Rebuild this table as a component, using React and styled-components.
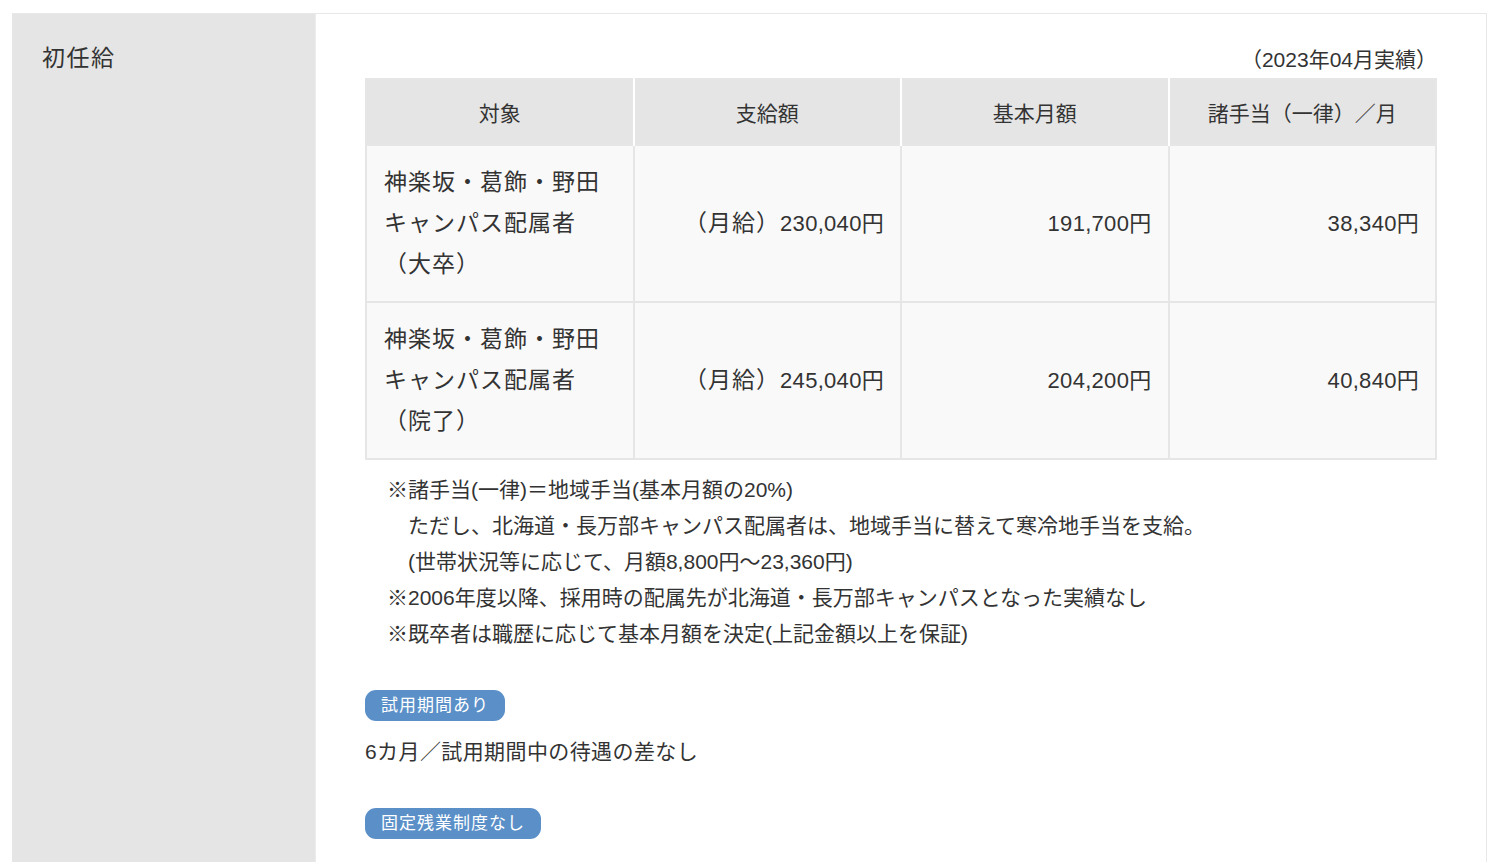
import React from 'react'
import styled, { createGlobalStyle } from 'styled-components'

const GlobalStyle = createGlobalStyle`
  html, body {
    margin: 0;
    padding: 0;
    background: #fff;
  }
  body {
    font-family: "Liberation Sans", "Noto Sans CJK JP", sans-serif;
    color: #333;
  }
`

//page wrapper
const Page = styled.div`
  padding: 13px 13px 0 12px;
  height: 862px;
  box-sizing: border-box;
  overflow: hidden;
`

//one definition row : label column + content
const Row = styled.section`
  display: grid;
  grid-template-columns: 304px 1fr;
  border-top: 1px solid #e8e8e8;
  border-right: 1px solid #e8e8e8;
  min-height: 849px;
`

const Label = styled.h2`
  margin: 0;
  background: #e5e5e5;
  padding: 26px 30px;
  font-size: 23px;
  font-weight: 400;
  line-height: 36px;
  letter-spacing: 1.5px;
  border-right: 1px solid #ececec;
`

const Content = styled.div`
  padding: 0 49px 0 49px;
`

const Caption = styled.p`
  margin: 0;
  padding: 28px 0 0 0;
  text-align: right;
  font-size: 21px;
  line-height: 36px;
`

const Table = styled.table`
  width: 100%;
  border-collapse: collapse;
  table-layout: fixed;
  border: 2px solid #e6e6e6;
`

const Th = styled.th`
  background: #e5e5e5;
  height: 66px;
  box-sizing: border-box;
  padding: 0 10px;
  font-size: 21px;
  font-weight: 400;
  text-align: center;
  border-left: 2px solid #fff;
  &:first-child {
    border-left: none;
  }
`

const Td = styled.td`
  background: #f9f9f9;
  height: 157px;
  box-sizing: border-box;
  padding: 0 16px 0 17px;
  font-size: 23px;
  line-height: 41px;
  letter-spacing: 1px;
  vertical-align: middle;
  text-align: ${p => (p.$right ? 'right' : 'left')};
  border: 2px solid #e6e6e6;
`

const Num = styled.span`
  font-size: 22px;
  letter-spacing: 0.3px;
`

const Notes = styled.div`
  margin: 12px 0 0;
  padding-left: 22px;
  font-size: 21px;
  line-height: 36px;
`

const NoteLine = styled.p`
  margin: 0;
  padding-left: ${p => (p.$indent ? '21px' : '0')};
`

const Badge = styled.span`
  display: inline-block;
  margin-top: ${p => p.$top}px;
  background: #5a8fc8;
  color: #fff;
  font-size: 17px;
  line-height: 31px;
  height: 31px;
  padding: 0 16px;
  border-radius: 11px;
  letter-spacing: 1px;
`

const Text = styled.p`
  margin: 13px 0 0;
  font-size: 21px;
  line-height: 36px;
  letter-spacing: 0.4px;
`

const rows = [
  { target: ['神楽坂・葛飾・野田', 'キャンパス配属者', '（大卒）'], pay: '230,040円', base: '191,700円', extra: '38,340円' },
  { target: ['神楽坂・葛飾・野田', 'キャンパス配属者', '（院了）'], pay: '245,040円', base: '204,200円', extra: '40,840円' },
]

export default function App() {
  return (
    <Page>
      <GlobalStyle />
      <Row>
        <Label>初任給</Label>
        <Content>
          <Caption>（2023年04月実績）</Caption>
          <Table>
            <thead>
              <tr>
                <Th>対象</Th>
                <Th>支給額</Th>
                <Th>基本月額</Th>
                <Th>諸手当（一律）／月</Th>
              </tr>
            </thead>
            <tbody>
              {rows.map((r, i) => (
                <tr key={i}>
                  <Td>
                    {r.target.map((t, j) => (
                      <div key={j}>{t}</div>
                    ))}
                  </Td>
                  <Td $right>
                    （月給）<Num>{r.pay}</Num>
                  </Td>
                  <Td $right>
                    <Num>{r.base}</Num>
                  </Td>
                  <Td $right>
                    <Num>{r.extra}</Num>
                  </Td>
                </tr>
              ))}
            </tbody>
          </Table>
          <Notes>
            <NoteLine>※諸手当(一律)＝地域手当(基本月額の20%)</NoteLine>
            <NoteLine $indent>ただし、北海道・長万部キャンパス配属者は、地域手当に替えて寒冷地手当を支給。</NoteLine>
            <NoteLine $indent>(世帯状況等に応じて、月額8,800円〜23,360円)</NoteLine>
            <NoteLine>※2006年度以降、採用時の配属先が北海道・長万部キャンパスとなった実績なし</NoteLine>
            <NoteLine>※既卒者は職歴に応じて基本月額を決定(上記金額以上を保証)</NoteLine>
          </Notes>
          <Badge $top={38}>試用期間あり</Badge>
          <Text>6カ月／試用期間中の待遇の差なし</Text>
          <Badge $top={38}>固定残業制度なし</Badge>
        </Content>
      </Row>
    </Page>
  )
}
